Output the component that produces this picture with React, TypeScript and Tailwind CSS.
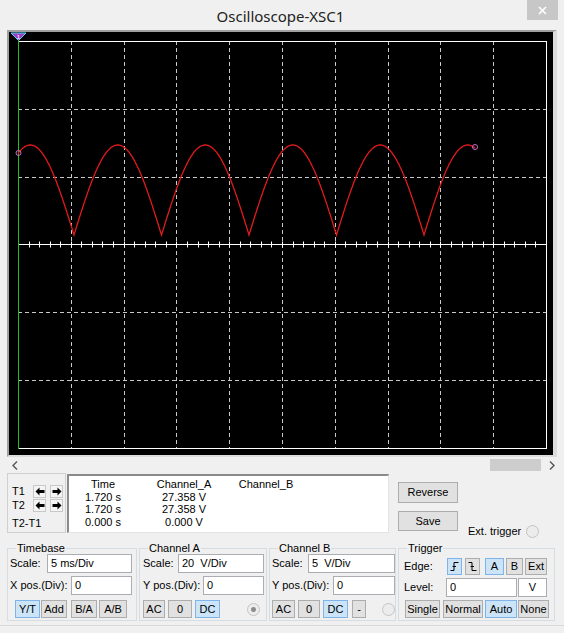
import React from 'react';

const GX0 = 18, GX1 = 546, GY0 = 41, GY1 = 448;

const wavePath = () => {
  const pts: string[] = [];
  for (let x = 18; x <= 475; x += 0.5) {
    const y = 235 - 90 * Math.abs(Math.sin((Math.PI * (x + 13.5)) / 87.5));
    pts.push(`${x.toFixed(1)},${y.toFixed(1)}`);
  }
  return 'M' + pts.join(' L');
};

const Scope: React.FC = () => {
  const vx = Array.from({ length: 9 }, (_, i) => Math.round(GX0 + ((GX1 - GX0) * (i + 1)) / 10) + 0.5);
  const hy = [1, 2, 4, 5].map(j => Math.round(GY0 + ((GY1 - GY0) * j) / 6) + 0.5);
  const cy = 244.5;
  const ticks = Array.from({ length: 51 }, (_, k) => Math.round(GX0 + ((GX1 - GX0) * k) / 50) + 0.5);
  return (
    <svg width={544} height={423} viewBox="9 32 544 423" className="block">
      <rect x={9} y={32} width={544} height={423} fill="#000" />
      {vx.map(x => (
        <line key={'v' + x} x1={x} y1={GY0} x2={x} y2={GY1} stroke="#c8c8c8" strokeDasharray="4 3" />
      ))}
      {hy.map(y => (
        <line key={'h' + y} x1={GX0} y1={y} x2={GX1} y2={y} stroke="#c8c8c8" strokeDasharray="4 3" />
      ))}
      <line x1={GX0} y1={cy} x2={GX1} y2={cy} stroke="#fff" />
      {ticks.map(x => (
        <line key={'t' + x} x1={x} y1={cy - 3} x2={x} y2={cy + 3} stroke="#fff" />
      ))}
      {/* frame */}
      <line x1={GX0} y1={GY0 + 0.5} x2={GX1 + 1} y2={GY0 + 0.5} stroke="#fff" />
      <line x1={GX1 + 0.5} y1={GY0} x2={GX1 + 0.5} y2={GY1 + 1} stroke="#fff" />
      <line x1={GX0} y1={GY1 + 0.5} x2={GX1 + 1} y2={GY1 + 0.5} stroke="#fff" />
      <line x1={GX0 + 0.5} y1={GY0} x2={GX0 + 0.5} y2={GY1 + 1} stroke="#1fc01f" />
      {/* trace */}
      <path d={wavePath()} fill="none" stroke="#e31b1b" strokeWidth={1.3} />
      <circle cx={18.5} cy={153} r={2.5} fill="none" stroke="#c86ac8" />
      <circle cx={475} cy={147} r={2.5} fill="none" stroke="#c86ac8" />
      {/* T1 cursor handle */}
      <polygon points="11,33 26,33 18.5,40.5" fill="#9a3fc4" stroke="#4fd6f0" strokeWidth={1} />
      <text x={18.5} y={38.5} fontSize={6} fill="#fff" textAnchor="middle" fontFamily="Liberation Sans, sans-serif">1</text>
    </svg>
  );
};

const Btn: React.FC<{ w: string; on?: boolean; h?: string; className?: string; children: React.ReactNode }> = ({ w, on, h = 'h-[18px]', className = '', children }) => (
  <div
    className={`${w} ${h} ${className} flex items-center justify-center border ${
      on ? 'bg-[#cce4f7] border-[#7eb4ea]' : 'bg-[#e1e1e1] border-[#adadad]'
    }`}
  >
    {children}
  </div>
);

const Field: React.FC<{ w: string; h?: string; center?: boolean; children?: React.ReactNode }> = ({ w, h = 'h-[19px]', center, children }) => (
  <div
    className={`${w} ${h} flex items-center bg-white border border-[#abadb3] whitespace-pre ${
      center ? 'justify-center' : 'pl-[3px]'
    }`}
  >
    {children}
  </div>
);

const Radio: React.FC<{ dot?: boolean; className?: string }> = ({ dot, className = '' }) => (
  <div className={`w-[13px] h-[13px] rounded-full border border-[#c4c4c4] bg-[#ececec] flex items-center justify-center ${className}`}>
    {dot && <div className="w-[5px] h-[5px] rounded-full bg-[#8c8c8c]" />}
  </div>
);

const Arrow: React.FC<{ left?: boolean }> = ({ left }) => (
  <div className="w-[13px] h-[13px] border border-[#c8c8c8] bg-[#f4f4f4] flex items-center justify-center">
    <svg width="10" height="9" viewBox="0 0 10 9">
      {left ? (
        <path d="M0.5 4.5 L4.5 0.5 L4.5 3 L9.5 3 L9.5 6 L4.5 6 L4.5 8.5 Z" fill="#000" />
      ) : (
        <path d="M9.5 4.5 L5.5 0.5 L5.5 3 L0.5 3 L0.5 6 L5.5 6 L5.5 8.5 Z" fill="#000" />
      )}
    </svg>
  </div>
);

const Group: React.FC<{ title: string; w: string; children: React.ReactNode }> = ({ title, w, children }) => (
  <fieldset className={`${w} border border-[#d5dde3] pb-[2px]`}>
    <legend className="ml-[8px] px-[1px] leading-[11px]">{title}</legend>
    {children}
  </fieldset>
);

const App: React.FC = () => {
  return (
    <div className="w-[564px] h-[633px] bg-[#f0f0f0] overflow-hidden text-[11px] text-black font-['Liberation_Sans',Arial,sans-serif]">
      {/* title bar */}
      <div className="h-[30px] flex">
        <div className="flex-1 flex items-center justify-center pt-[2px] pl-[34px] font-['Noto_Sans',sans-serif] text-[15px] text-[#222]">
          Oscilloscope-XSC1
        </div>
        <div className="w-[31px] h-[20px] mr-[6px] bg-[#c7c7c7] flex items-center justify-center">
          <svg width="9" height="9" viewBox="0 0 9 9">
            <path d="M1 1 L8 8 M8 1 L1 8" stroke="#fff" strokeWidth={1.6} />
          </svg>
        </div>
      </div>

      {/* scope */}
      <div className="ml-[7px] w-[550px] h-[427px] border-t-2 border-l-2 border-r-4 border-b-2 border-t-[#a0a0a0] border-l-[#a0a0a0] border-r-[#dcdcdc] border-b-[#dcdcdc]">
        <Scope />
      </div>

      {/* scrollbar */}
      <div className="h-[16px] flex items-center">
        <svg width="6" height="9" viewBox="0 0 6 9" className="ml-[12px]">
          <path d="M5 0.5 L1 4.5 L5 8.5" fill="none" stroke="#555" strokeWidth={1.4} />
        </svg>
        <div className="flex-1" />
        <div className="w-[51px] h-[12px] bg-[#cdcdcd]" />
        <svg width="6" height="9" viewBox="0 0 6 9" className="ml-[8px] mr-[9px]">
          <path d="M1 0.5 L5 4.5 L1 8.5" fill="none" stroke="#555" strokeWidth={1.4} />
        </svg>
      </div>

      {/* cursor readout */}
      <div className="flex items-start">
        <div className="ml-[7px] w-[59px] h-[60px] border border-[#d0d0d0] pt-[10px] pl-[4px]">
          <div className="h-[14px] flex items-center">
            <span className="w-[21px]">T1</span>
            <Arrow left />
            <div className="ml-[4px]"><Arrow /></div>
          </div>
          <div className="h-[14px] flex items-center">
            <span className="w-[21px]">T2</span>
            <Arrow left />
            <div className="ml-[4px]"><Arrow /></div>
          </div>
          <div className="h-[14px] mt-[4px] flex items-center">T2-T1</div>
        </div>

        <div className="ml-[1px] mt-[1px] w-[322px] h-[59px] bg-white border-t-2 border-l-2 border-r border-b border-t-[#8a8a8a] border-l-[#8a8a8a] border-r-[#e3e3e3] border-b-[#e3e3e3] pt-[2px] leading-[12.7px]">
          {[
            ['Time', 'Channel_A', 'Channel_B'],
            ['1.720 s', '27.358 V', ''],
            ['1.720 s', '27.358 V', ''],
            ['0.000 s', '0.000 V', ''],
          ].map((r, i) => (
            <div key={i} className="flex">
              <div className="ml-[2px] w-[64px] text-center">{r[0]}</div>
              <div className="ml-[15px] w-[68px] text-center">{r[1]}</div>
              <div className="w-[96px] text-center">{r[2]}</div>
            </div>
          ))}
        </div>

        <div className="ml-[9px] w-[60px] pt-[9px]">
          <Btn w="w-[60px]" h="h-[21px]">Reverse</Btn>
          <Btn w="w-[60px]" h="h-[20px]" className="mt-[8px]">Save</Btn>
        </div>

        <div className="ml-[10px] pt-[51px] h-[65px] flex items-center gap-[5px]">
          <span className="h-[14px] flex items-center">Ext. trigger</span>
          <Radio />
        </div>
      </div>

      {/* control groups */}
      <div className="mt-[5px] ml-[7px] flex gap-[2px]">
        <Group title="Timebase" w="w-[130px]">
          <div className="pl-[2px] flex items-center">
            <span className="w-[37px]">Scale:</span>
            <Field w="w-[85px]">5 ms/Div</Field>
          </div>
          <div className="pl-[2px] mt-[3px] flex items-center">
            <span className="w-[61px]">X pos.(Div):</span>
            <Field w="w-[61px]">0</Field>
          </div>
          <div className="pl-[7px] mt-[5px] flex">
            <Btn w="w-[25px]" on>Y/T</Btn>
            <Btn w="w-[26px]" className="ml-[1px]">Add</Btn>
            <Btn w="w-[26px]" className="ml-[4px]">B/A</Btn>
            <Btn w="w-[28px]" className="ml-[2px]">A/B</Btn>
          </div>
        </Group>

        <Group title="Channel A" w="w-[128px]">
          <div className="pl-[3px] flex items-center">
            <span className="w-[35px]">Scale:</span>
            <Field w="w-[86px]">20  V/Div</Field>
          </div>
          <div className="pl-[3px] mt-[3px] flex items-center">
            <span className="w-[60px]">Y pos.(Div):</span>
            <Field w="w-[61px]">0</Field>
          </div>
          <div className="pl-[3px] mt-[5px] flex items-center">
            <Btn w="w-[22px]">AC</Btn>
            <Btn w="w-[24px]" className="ml-[3px]">0</Btn>
            <Btn w="w-[25px]" className="ml-[3px]" on>DC</Btn>
            <Radio dot className="ml-[27px]" />
          </div>
        </Group>

        <Group title="Channel B" w="w-[127px]">
          <div className="pl-[2px] flex items-center">
            <span className="w-[36px]">Scale:</span>
            <Field w="w-[87px]">5  V/Div</Field>
          </div>
          <div className="pl-[2px] mt-[3px] flex items-center">
            <span className="w-[61px]">Y pos.(Div):</span>
            <Field w="w-[62px]">0</Field>
          </div>
          <div className="pl-[2px] mt-[5px] flex items-center">
            <Btn w="w-[23px]">AC</Btn>
            <Btn w="w-[22px]" className="ml-[3px]">0</Btn>
            <Btn w="w-[25px]" className="ml-[3px]" on>DC</Btn>
            <Btn w="w-[14px]" className="ml-[4px]">-</Btn>
            <Radio className="ml-[16px]" />
          </div>
        </Group>

        <Group title="Trigger" w="w-[157px]">
          <div className="pl-[5px] mt-[4px] flex items-center">
            <span className="w-[43px]">Edge:</span>
            <Btn w="w-[15px]" h="h-[17px]" on>
              <svg width="9" height="11" viewBox="0 0 9 11">
                <path d="M0.5 9.5 H4 V1.5 H8.5 M2.5 5.5 H6" fill="none" stroke="#000" strokeWidth={1} />
              </svg>
            </Btn>
            <Btn w="w-[15px]" h="h-[17px]" className="ml-[3px]">
              <svg width="9" height="11" viewBox="0 0 9 11">
                <path d="M0.5 1.5 H4 V9.5 H8.5 M2.5 5.5 H6" fill="none" stroke="#000" strokeWidth={1} />
              </svg>
            </Btn>
            <Btn w="w-[19px]" h="h-[17px]" className="ml-[5px]" on>A</Btn>
            <Btn w="w-[17px]" h="h-[17px]" className="ml-[2px]">B</Btn>
            <Btn w="w-[22px]" h="h-[17px]" className="ml-[2px]">Ext</Btn>
          </div>
          <div className="pl-[5px] mt-[3px] flex items-center">
            <span className="w-[42px]">Level:</span>
            <Field w="w-[71px]">0</Field>
            <div className="ml-[1px]">
              <Field w="w-[29px]" center>V</Field>
            </div>
          </div>
          <div className="pl-[6px] mt-[3px] flex items-center">
            <Btn w="w-[35px]">Single</Btn>
            <Btn w="w-[40px]" className="ml-[3px]">Normal</Btn>
            <Btn w="w-[32px]" className="ml-[2px]" on>Auto</Btn>
            <Btn w="w-[31px]" className="ml-[1px]">None</Btn>
          </div>
        </Group>
      </div>

      <div className="mt-[4px] border-t border-[#d9d9d9]" />
    </div>
  );
};

export default App;
